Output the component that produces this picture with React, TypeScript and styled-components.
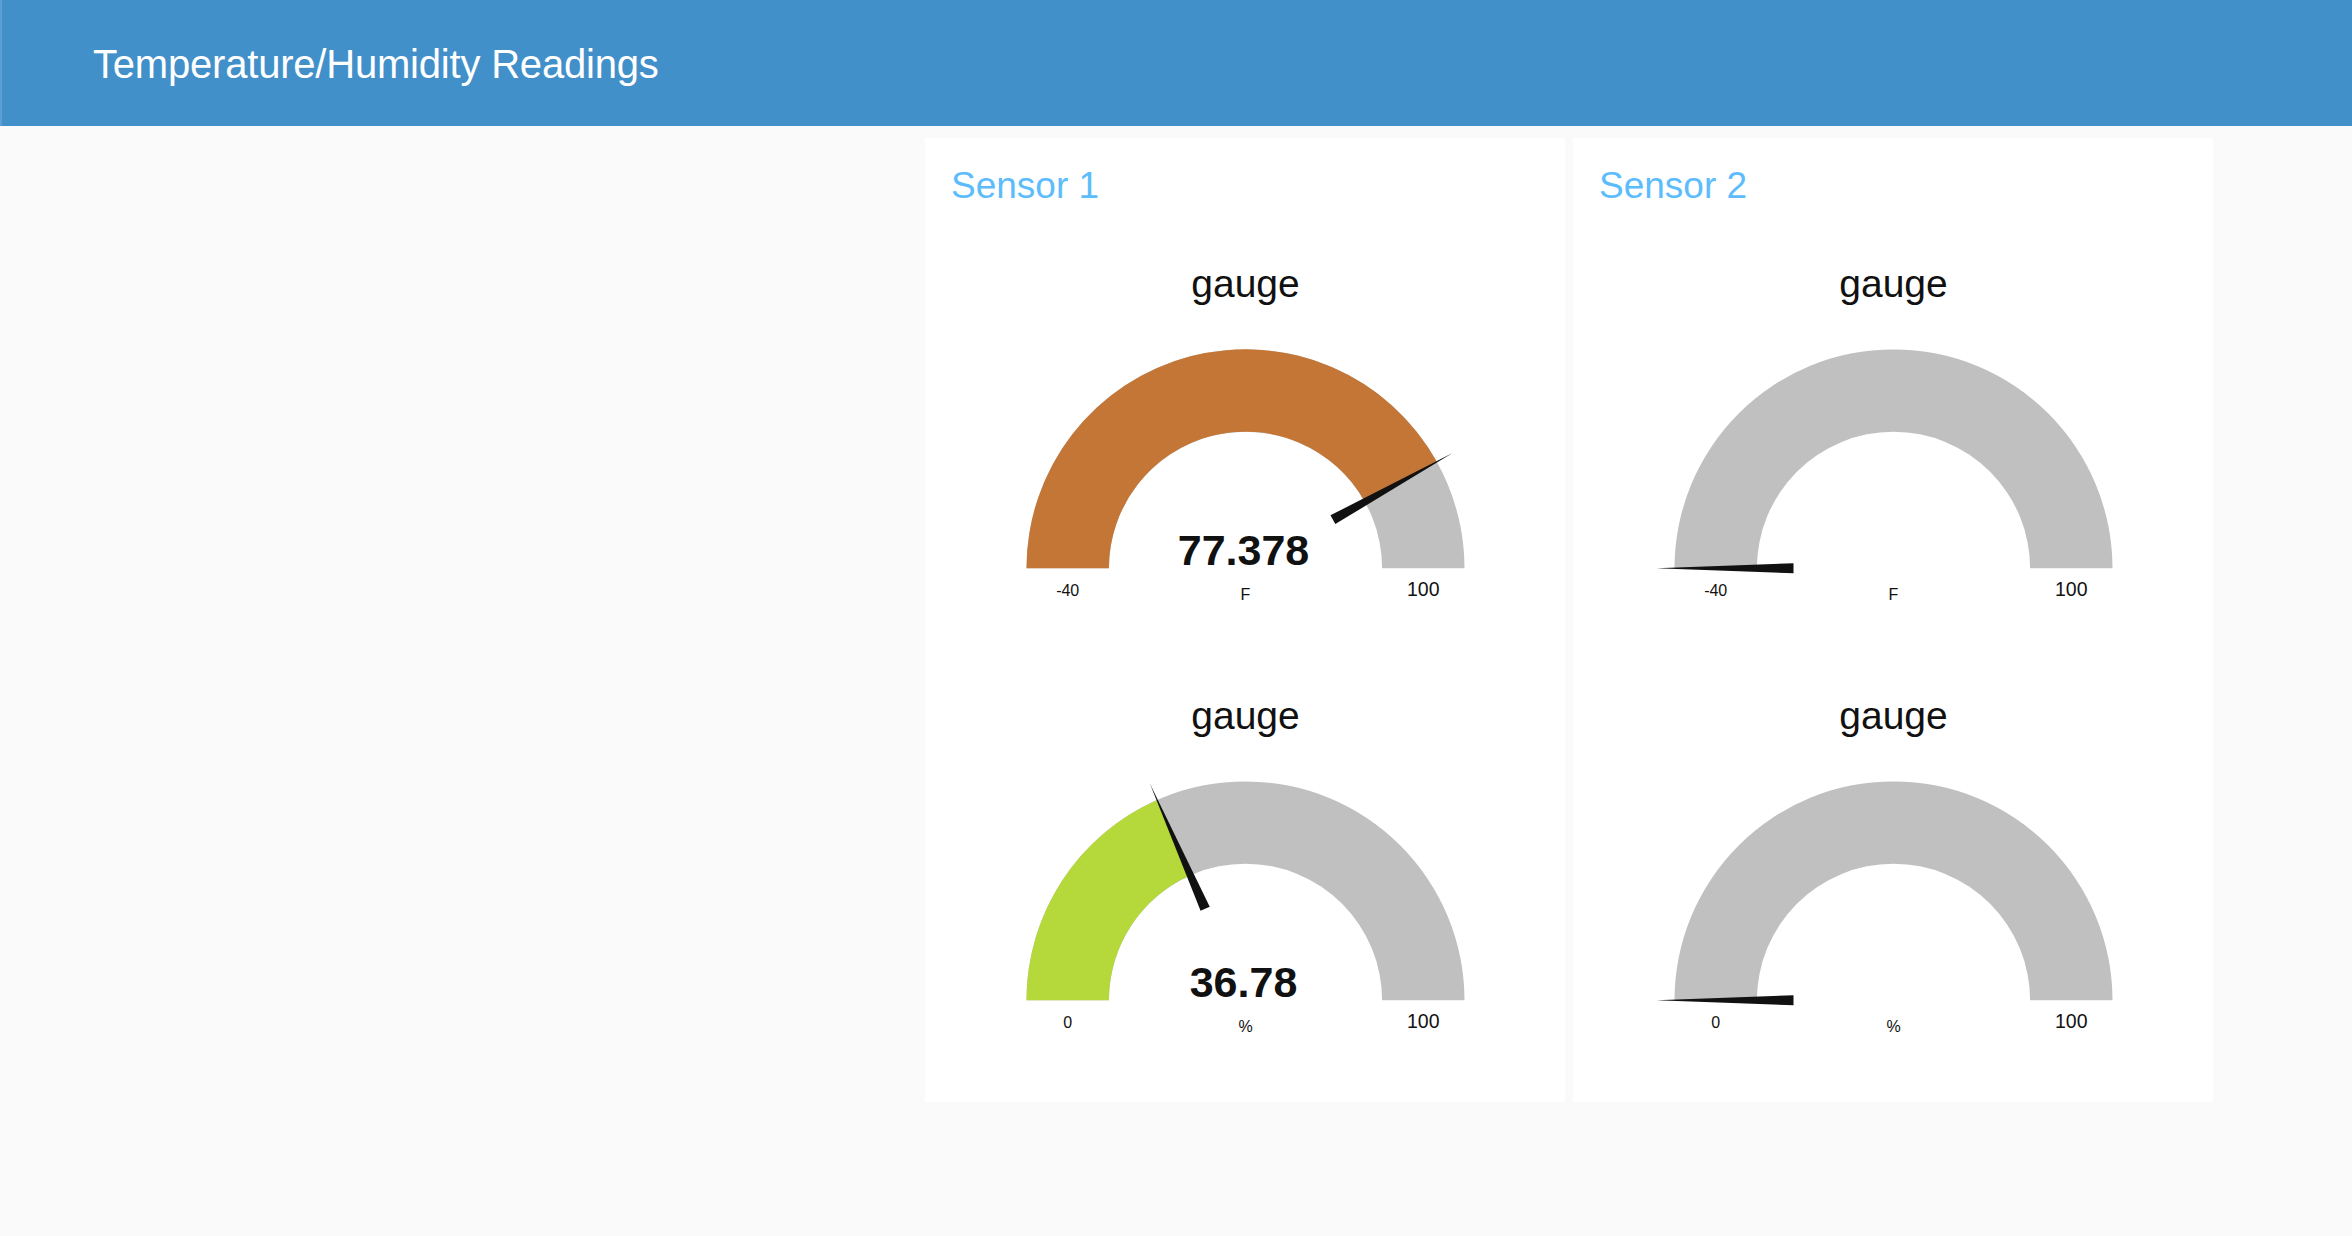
import React from "react";
import styled, { createGlobalStyle } from "styled-components";

const GlobalStyle = createGlobalStyle`
  html, body {
    margin: 0;
    padding: 0;
    background: #fafafa;
    font-family: "Liberation Sans", Arial, Helvetica, sans-serif;
  }
`;

const Page = styled.div`
  min-height: 1236px;
  background: #fafafa;
`;

const Toolbar = styled.header`
  height: 126px;
  box-sizing: border-box;
  display: flex;
  align-items: center;
  padding: 2px 0 0 91px;
  background: #4290ca;
  border-left: 2px solid #5b9fd4;
`;

const ToolbarTitle = styled.h1`
  margin: 0;
  font-size: 40px;
  font-weight: 400;
  line-height: 46px;
  color: #ffffff;
  letter-spacing: -0.2px;
`;

const Content = styled.main`
  display: flex;
  align-items: flex-start;
  gap: 8px;
  padding: 12px 0 0 925px;
`;

const Card = styled.section`
  width: 640px;
  background: #ffffff;
  display: flex;
  flex-direction: column;
  padding-bottom: 16px;
`;

const CardTitle = styled.h2`
  margin: 0 0 16px;
  padding: 28px 26px 0;
  height: 40px;
  font-size: 37px;
  line-height: 40px;
  font-weight: 400;
  color: #5cbcfc;
`;

const GaugeSvg = styled.svg`
  display: block;
  width: 640px;
  height: 432px;
`;

const GaugeTitle = styled.text`
  font-family: "Liberation Sans", Arial, sans-serif;
  font-size: 39px;
  fill: #111111;
`;

const GaugeValue = styled.text`
  font-family: "Liberation Sans", Arial, sans-serif;
  font-size: 43px;
  font-weight: 700;
  fill: #111111;
`;

const GaugeLabel = styled.text<{ $size: number }>`
  font-family: "Liberation Sans", Arial, sans-serif;
  font-size: ${(p) => p.$size}px;
  fill: #111111;
`;

type GaugeProps = {
  min: number;
  max: number;
  value: number | null;
  unit: string;
  color: string;
};

const CX = 320.5;
const CY = 346.3;
const R = 219;
const RI = 136.6;

const pt = (rad: number, ang: number) =>
  `${(CX + rad * Math.cos(ang)).toFixed(2)} ${(CY - rad * Math.sin(ang)).toFixed(2)}`;

const Gauge: React.FC<GaugeProps> = ({ min, max, value, unit, color }) => {
  const v = value === null ? min : value;
  const f = Math.max(0, Math.min(1, (v - min) / (max - min)));
  const theta = Math.PI * (1 - f);
  const bg = `M ${pt(R, Math.PI)} A ${R} ${R} 0 0 1 ${pt(R, 0)} L ${pt(RI, 0)} A ${RI} ${RI} 0 0 0 ${pt(RI, Math.PI)} Z`;
  const fg = `M ${pt(R, Math.PI)} A ${R} ${R} 0 0 1 ${pt(R, theta)} L ${pt(RI, theta)} A ${RI} ${RI} 0 0 0 ${pt(RI, Math.PI)} Z`;
  const perp = theta + Math.PI / 2;
  const hw = 5;
  const bx = CX + 100 * Math.cos(theta);
  const by = CY - 100 * Math.sin(theta);
  const b1 = `${(bx + hw * Math.cos(perp)).toFixed(2)},${(by - hw * Math.sin(perp)).toFixed(2)}`;
  const b2 = `${(bx - hw * Math.cos(perp)).toFixed(2)},${(by + hw * Math.sin(perp)).toFixed(2)}`;
  const tip = `${(CX + 237 * Math.cos(theta)).toFixed(2)},${(CY - 237 * Math.sin(theta)).toFixed(2)}`;
  return (
    <GaugeSvg viewBox="0 0 640 432">
      <GaugeTitle x={CX} y={74.7} textAnchor="middle">
        gauge
      </GaugeTitle>
      <path d={bg} fill="#c0c0c0" />
      {value !== null && f > 0 && <path d={fg} fill={color} />}
      <polygon points={`${b1} ${b2} ${tip}`} fill="#111111" />
      {value !== null && (
        <GaugeValue x={CX - 2} y={343} textAnchor="middle">
          {value}
        </GaugeValue>
      )}
      <GaugeLabel $size={16} x={CX - 177.8} y={373.5} textAnchor="middle">
        {min}
      </GaugeLabel>
      <GaugeLabel $size={16} x={CX} y={378} textAnchor="middle">
        {unit}
      </GaugeLabel>
      <GaugeLabel $size={19.5} x={CX + 177.8} y={373.5} textAnchor="middle">
        {max}
      </GaugeLabel>
    </GaugeSvg>
  );
};

const sensors = [
  {
    name: "Sensor 1",
    temp: 77.378 as number | null,
    hum: 36.78 as number | null,
  },
  { name: "Sensor 2", temp: null as number | null, hum: null as number | null },
];

export default function App() {
  return (
    <Page>
      <GlobalStyle />
      <Toolbar>
        <ToolbarTitle>Temperature/Humidity Readings</ToolbarTitle>
      </Toolbar>
      <Content>
        {sensors.map((s) => (
          <Card key={s.name}>
            <CardTitle>{s.name}</CardTitle>
            <Gauge min={-40} max={100} value={s.temp} unit="F" color="#c47636" />
            <Gauge min={0} max={100} value={s.hum} unit="%" color="#b5d83a" />
          </Card>
        ))}
      </Content>
    </Page>
  );
}
